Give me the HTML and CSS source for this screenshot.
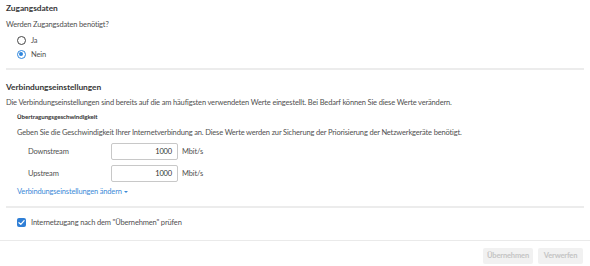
FILE: index.html
```html
<!DOCTYPE html>
<html lang="de">
<head>
<meta charset="utf-8">
<link rel="stylesheet" href="styles.css">
</head>
<body>
<div class="page">
  <div class="content">
    <h2 class="h-zug">Zugangsdaten</h2>
    <p class="q">Werden Zugangsdaten benötigt?</p>
    <div class="radios">
      <label class="radio"><span class="rb"></span><span>Ja</span></label>
      <label class="radio"><span class="rb on"></span><span>Nein</span></label>
    </div>
    <div class="sep sep1"></div>
    <h2 class="h-verb">Verbindungseinstellungen</h2>
    <p class="desc">Die Verbindungseinstellungen sind bereits auf die am häufigsten verwendeten Werte eingestellt. Bei Bedarf können Sie diese Werte verändern.</p>
    <h3 class="sub">Übertragungsgeschwindigkeit</h3>
    <p class="desc2">Geben Sie die Geschwindigkeit Ihrer Internetverbindung an. Diese Werte werden zur Sicherung der Priorisierung der Netzwerkgeräte benötigt.</p>
    <div class="rows">
      <div class="row"><span class="lbl">Downstream</span><span class="inp">1000</span><span class="unit">Mbit/s</span></div>
      <div class="row"><span class="lbl">Upstream</span><span class="inp">1000</span><span class="unit">Mbit/s</span></div>
    </div>
    <a class="link">Verbindungseinstellungen ändern<span class="caret"></span></a>
    <div class="sep sep2"></div>
    <label class="check"><span class="cb"><svg viewBox="0 0 10 10" width="9" height="9"><path d="M2.2 5.2 L4.2 7.1 L7.9 3" fill="none" stroke="#fff" stroke-width="1.4" stroke-linecap="round" stroke-linejoin="round"/></svg></span><span>Internetzugang nach dem "Übernehmen" prüfen</span></label>
  </div>
  <div class="footer">
    <span class="btn btn-apply">Übernehmen</span>
    <span class="btn btn-discard">Verwerfen</span>
  </div>
</div>
</body>
</html>
```
FILE: styles.css
```css
* { box-sizing: border-box; }
html, body { margin: 0; padding: 0; background: #fff; }
body {
  font-family: "Source Sans Pro", Lato, "Liberation Sans", sans-serif;
  font-size: 7.5px;
  letter-spacing: -0.16px;
  color: #505050;
}
.page { width: 590px; }
.content { padding: 0 10px 0 6px; }
h2, h3, p { margin: 0; }
.h-zug, .h-verb {
  font-size: 8.4px;
  font-weight: 700;
  color: #383838;
  height: 16px;
  line-height: 16px;
  letter-spacing: -0.05px;
}
.q { height: 16px; line-height: 17px; margin-top: 0; }
.radios { padding-left: 11px; padding-top: 1px; }
.radio { display: flex; align-items: center; height: 14px; gap: 5px; }
.rb {
  width: 9px; height: 9px; border-radius: 50%;
  border: 1.3px solid #444; display: inline-block; position: relative;
}
.rb.on { border-color: #2f86dd; }
.rb.on::after {
  content: ""; position: absolute; left: 1.3px; top: 1.3px;
  width: 3.8px; height: 3.8px; border-radius: 50%; background: #2f86dd;
}
.sep { height: 2px; background: #ececec; margin-right: -4px; }
.sep1 { margin-top: 7px; }
.h-verb { margin-top: 9px; }
.desc { height: 16px; line-height: 16px; }
.sub { font-size: 6.2px; font-weight: 700; color: #333; height: 12px; line-height: 12px; padding-left: 11px; letter-spacing: -0.05px; }
.desc2 { height: 19px; line-height: 19px; padding-left: 11px; }
.rows { display: flex; flex-direction: column; gap: 5px; padding-top: 1px; }
.row { display: flex; align-items: center; padding-left: 22px; }
.lbl { width: 83px; }
.inp {
  width: 67px; height: 17px; border: 1px solid #c8c8c8; border-radius: 2px;
  text-align: right; padding-right: 5px; line-height: 15px; color: #333;
}
.unit { margin-left: 4px; }
.link {
  display: block; color: #3c8ad8; height: 17px; line-height: 17px;
  padding-left: 11px; margin-top: 1px;
}
.caret {
  display: inline-block; width: 0; height: 0; margin-left: 2px; vertical-align: middle;
  border-left: 2px solid transparent; border-right: 2px solid transparent; border-top: 2.5px solid #3c8ad8;
}
.sep2 { margin-top: 6px; }
.check { display: flex; align-items: center; gap: 5px; padding-left: 11px; height: 16px; margin-top: 6px; }
.cb {
  width: 9px; height: 9px; border-radius: 2px; background: #2f7fd6;
  display: inline-flex; align-items: center; justify-content: center;
}
.cb svg { display: block; }
.footer {
  margin-top: 10px; border-top: 1px solid #eaeaea;
  display: flex; justify-content: flex-end; gap: 5px; padding: 7px 7px 0 0;
}
.btn {
  height: 16px; line-height: 16px; background: #f1f1f1; color: #c4c4c4;
  border-radius: 2px; font-weight: 700; font-size: 7.5px; text-align: center;
}
.btn-apply { width: 50px; }
.btn-discard { width: 45px; }
```
